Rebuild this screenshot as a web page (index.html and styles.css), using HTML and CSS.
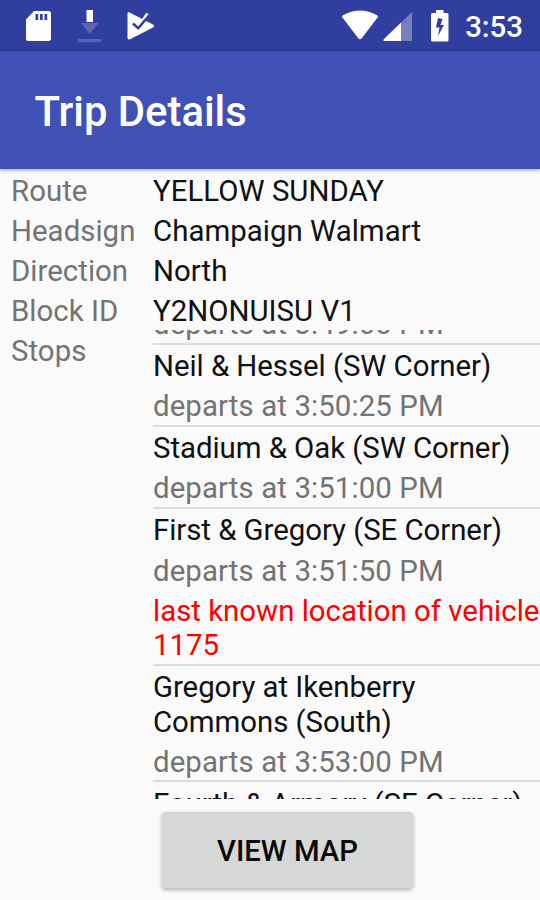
FILE: index.html
```
<!DOCTYPE html>
<html lang="en">
<head>
<meta charset="utf-8">
<title>Trip Details</title>
<link rel="stylesheet" href="styles.css">
</head>
<body>
<div class="screen">
  <div class="status">
    <svg class="status-icons" width="540" height="51" viewBox="0 0 540 51" fill="#fff" aria-hidden="true">
      <path fill-rule="evenodd" d="M34 11H48.500a2.500 2.500 0 0 1 2.500 2.500V38.500a2.500 2.500 0 0 1-2.500 2.500H28.500a2.500 2.500 0 0 1-2.500-2.500V19.500ZM35.500 14v6h2.700v-6ZM40 14v6h2.700v-6ZM44.500 14v6h2.700v-6Z"/>
      <path d="M86.500 10h6.500v12h-6.500z"/>
      <path class="faint" d="M81 23h17.500l-8.700 11zM78 39h23v3.300h-23z"/>
      <path d="M127.500 13.500q0-2 2-1L153 24.500q2 1.500 0 3L130 39.300q-2.500 1-2.500-1.500Z"/>
      <path class="tick-end" d="M138 20l3.500 2.500L147.500 13.500"/>
      <path class="tick" d="M133 23.500l5.200 4.700L149 15.500"/>
      <path d="M342 17q0-1 1-1.700Q360 5.500 377 15.300q1 .7 1 1.700L361.500 38.500q-1.500 1.500-3 0Z"/>
      <path class="dim" d="M412 12v29h-12V24Z"/>
      <path d="M401 22.500V41H384q-1.500-.5 0-2Z"/>
      <path fill-rule="evenodd" d="M436 10h7.500v3H447q1.500 0 1.500 1.500V40q0 1.500-1.500 1.500H432.500q-1.500 0-1.500-1.500V14.500q0-1.500 1.500-1.500H436ZM438 18l-2 9.500h3.500L438 36l6-11h-3.500l2-6Z"/>
    </svg>
    <span class="clock">3:53</span>
  </div>
  <header class="appbar"><h1>Trip Details</h1></header>
  <main class="details">
    <div class="label">Route</div><div class="value">YELLOW SUNDAY</div>
    <div class="label">Headsign</div><div class="value">Champaign Walmart</div>
    <div class="label">Direction</div><div class="value">North</div>
    <div class="label">Block ID</div><div class="value">Y2NONUISU V1</div>
    <div class="label">Stops</div>
    <div class="stops">
      <div class="stop first"><p class="time">departs at 3:49:00 PM</p></div>
      <div class="stop"><p>Neil &amp; Hessel (SW Corner)</p><p class="time">departs at 3:50:25 PM</p></div>
      <div class="stop"><p>Stadium &amp; Oak (SW Corner)</p><p class="time">departs at 3:51:00 PM</p></div>
      <div class="stop"><p>First &amp; Gregory (SE Corner)</p><p class="time">departs at 3:51:50 PM</p><p class="vehicle">last known location of vehicle<br>1175</p></div>
      <div class="stop"><p>Gregory at Ikenberry<br>Commons (South)</p><p class="time">departs at 3:53:00 PM</p></div>
      <div class="stop"><p>Fourth &amp; Armory (SE Corner)</p></div>
    </div>
  </main>
  <footer><button class="map" type="button">VIEW MAP</button></footer>
</div>
</body>
</html>
```
FILE: styles.css
```
* { box-sizing: border-box; }
body {
  margin: 0;
  font-family: Roboto, "Liberation Sans", sans-serif;
  background: #fafafa;
}
.screen {
  width: 540px;
  height: 900px;
  overflow: hidden;
  display: flex;
  flex-direction: column;
}
.status {
  position: relative;
  height: 51px;
  flex: none;
  display: flex;
  justify-content: flex-end;
  align-items: center;
  padding-right: 17px;
  background: #303f9f;
  color: #fff;
}
.status-icons { position: absolute; left: 0; top: 0; }
.dim { fill: #7680c0; }
.faint { fill: #5965b3; }
.tick { fill: none; stroke: #303f9f; stroke-width: 2.5; }
.tick-end { fill: none; stroke: #fff; stroke-width: 3; }
.clock { font-size: 29.4px; font-weight: 500; line-height: 34px; margin-top: 3px; }
.appbar {
  position: relative;
  height: 118px;
  flex: none;
  display: flex;
  align-items: center;
  padding: 3px 34.500px 0;
  background: #3f51b5;
  color: #fff;
  box-shadow: 0 1px 4px rgba(0, 0, 0, .4);
}
h1 { margin: 0; font-size: 41.8px; font-weight: 500; }
.details {
  height: 631px;
  flex: none;
  display: grid;
  grid-template-columns: 142px 387px;
  grid-template-rows: repeat(4, 40px) 1fr;
  padding: 1px 0 0 11px;
  font-size: 29.4px;
  line-height: 34.4px;
  color: #111;
  white-space: nowrap;
}
.label, .value { padding-top: 4px; letter-spacing: .03px; }
.label, .time { color: #737373; }
.stops {
  min-height: 0;
  margin-bottom: 1px;
  overflow: hidden;
}
.stop { border-bottom: 2px solid #dcdcdc; letter-spacing: -.05px; }
.first { margin-top: -27.500px; }
.stop p { margin: 0; padding: 4.500px 0 1.2px; }
.stop .time { letter-spacing: .1px; }
.stop .vehicle { color: #f00; letter-spacing: 0; }
footer { display: flex; padding: 12px 0 0 162px; }
.map {
  width: 251px;
  height: 76px;
  padding-top: 2px;
  border: 0;
  border-radius: 4px;
  background: #d6d7d7;
  color: #0a0a0a;
  font: 500 29.3px Roboto, "Liberation Sans", sans-serif;
  box-shadow: 0 2px 4px rgba(0, 0, 0, .3);
}
```
